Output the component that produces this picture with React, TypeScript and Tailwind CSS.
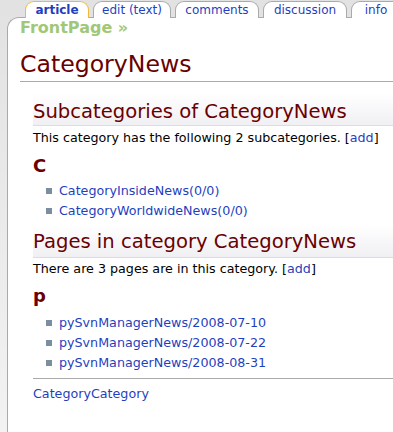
import React from "react";

const font = { fontFamily: '"DejaVu Sans", Verdana, sans-serif' };

function Tab({ label, w, active }: { label: string; w: string; active?: boolean }) {
  return (
    <div
      className={`${w} h-[17px] shrink-0 rounded-t-[9px] border border-b-0 bg-white text-center text-[12px] leading-[16px] text-[#1f3fbf] ${
        active ? "border-[#f0b840] text-[12.5px] font-bold text-[#1a2fa0]" : "border-[#aaaaaa]"
      }`}
    >
      {label}
    </div>
  );
}

function Li({ children }: { children: React.ReactNode }) {
  return (
    <li className="flex h-[20px] items-center">
      <span className="mr-[7px] ml-[13px] inline-block h-[6px] w-[6px] bg-[#7a8ea0]" />
      <a className="text-[12.7px] text-[#1f3fbf]">{children}</a>
    </li>
  );
}

export default function App() {
  return (
    <div
      className="h-[432px] w-[393px] overflow-hidden bg-gradient-to-b from-[#e2e2e2] to-[#f2f2f2]"
      style={font}
    >
      <div className="flex gap-[4px] pt-[1px] pl-[25px]">
        <Tab label="article" w="w-[64px]" active />
        <Tab label="edit (text)" w="w-[78px]" />
        <Tab label="comments" w="w-[84px]" />
        <Tab label="discussion" w="w-[84px]" />
        <Tab label="info" w="w-[50px]" />
      </div>
      <div className="-mt-px ml-[7px] h-[420px] rounded-tl-[12px] border-t border-l border-[#aaaaaa] bg-white pl-[12px]">
        <div className="h-[20px] pt-[1px] text-[16px] font-bold leading-[18px] text-[#a0c878]">
          FrontPage »
        </div>
        <h1 className="mt-[12px] h-[32px] border-b border-[#aaaaaa] text-[23.6px] leading-[28px] text-[#6a0000]">
          CategoryNews
        </h1>
        <div className="pl-[13px]">
          <h2 className="mt-[12px] h-[32px] border-b border-[#dddddd] bg-gradient-to-b from-white to-[#f0f0f4] pt-[6px] text-[19.6px] leading-[24px] text-[#6a0000]">
            Subcategories of CategoryNews
          </h2>
          <p className="mt-[2px] h-[20px] text-[12.7px] leading-[20px] text-black">
            This category has the following 2 subcategories. [<a className="text-[#1f3fbf]">add</a>]
          </p>
          <div className="mt-[7px] h-[22px] text-[18px] font-bold leading-[22px] text-[#6a0000]">C</div>
          <ul className="mt-[4px]">
            <Li>CategoryInsideNews(0/0)</Li>
            <Li>CategoryWorldwideNews(0/0)</Li>
          </ul>
          <h2 className="mt-[4px] h-[33px] border-b border-[#dddddd] bg-gradient-to-b from-white to-[#f0f0f4] pt-[5px] text-[19.6px] leading-[24px] text-[#6a0000]">
            Pages in category CategoryNews
          </h2>
          <p className="mt-[1px] h-[20px] text-[12.7px] leading-[20px] text-black">
            There are 3 pages are in this category. [<a className="text-[#1f3fbf]">add</a>]
          </p>
          <div className="mt-[6px] h-[22px] text-[18px] font-bold leading-[22px] text-[#6a0000]">p</div>
          <ul className="mt-[6px]">
            <Li>pySvnManagerNews/2008-07-10</Li>
            <Li>pySvnManagerNews/2008-07-22</Li>
            <Li>pySvnManagerNews/2008-08-31</Li>
          </ul>
          <div className="mt-[5px] border-t border-[#aaaaaa]" />
          <div className="mt-[6px] text-[12.7px] leading-[18px] text-[#1f3fbf]">CategoryCategory</div>
        </div>
      </div>
    </div>
  );
}
